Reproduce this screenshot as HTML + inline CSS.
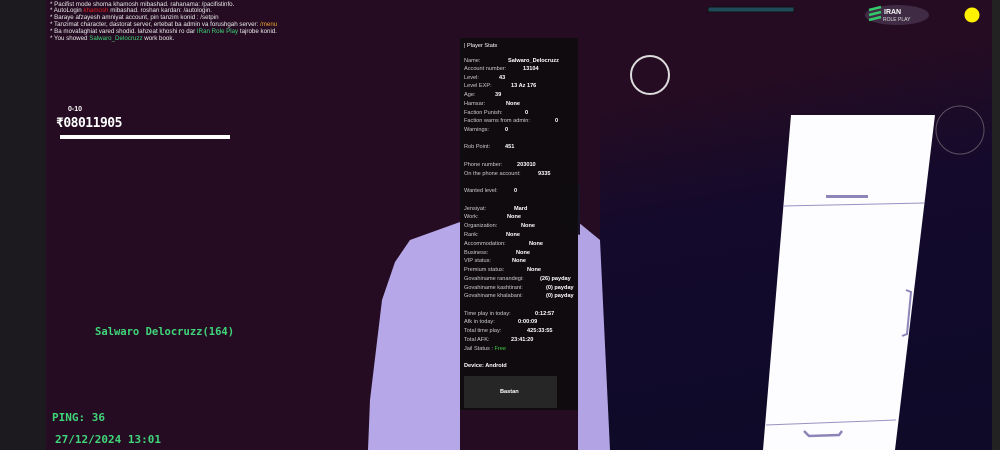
<!DOCTYPE html>
<html><head><meta charset="utf-8"><style>
*{margin:0;padding:0;box-sizing:border-box}
body{width:1000px;height:450px;overflow:hidden;background:#250c22;position:relative;font-family:"Liberation Sans",sans-serif}
.a{position:absolute}
.chat{left:50px;top:1px;color:#e8e8e8;font-size:6.2px;line-height:7px;white-space:nowrap}
.p{left:460px;top:38px;width:118px;height:372px;background:rgba(14,12,14,0.94)}
.l{position:absolute;left:4px;font-size:5.6px;color:#ccc;white-space:nowrap}
.v{position:absolute;font-size:5.6px;color:#fff;font-weight:bold;white-space:nowrap}
.hud{font-family:"DejaVu Sans Mono","Liberation Mono",monospace;font-weight:bold;color:#3fd67a}
</style></head><body>
<div class="a" style="left:0;top:0;width:46px;height:450px;background:#1c1a1e"></div>
<div class="a" style="left:600px;top:0;width:392px;height:450px;background:linear-gradient(170deg,rgba(37,12,34,1) 20%,rgba(20,10,44,1) 45%,rgba(14,10,40,1) 100%)"></div>
<div class="a" style="left:992px;top:0;width:8px;height:450px;background:#222"></div>
<svg class="a" style="left:0;top:0" width="1000" height="450">
<polygon points="410,240 460,222 460,450 368,450 370,400 382,300 395,262" fill="#b6a8e8"/>
<polygon points="578,222 600,240 610,450 578,450" fill="#b2a4e4"/>
<polygon points="560,180 580,185 580,235 560,228" fill="#1a1428"/>
<polygon points="791,115 935,115 895,450 763,450" fill="#fdfcff"/>
<line x1="783" y1="206" x2="924" y2="203" stroke="#9a92c0" stroke-width="1"/>
<line x1="766" y1="425" x2="896" y2="420" stroke="#9a92c0" stroke-width="1"/>
<rect x="826" y="195" width="42" height="3" fill="#8c86b8"/>
<path d="M804 431 l5 5 l30 -1 l3 -4" stroke="#8c86b8" stroke-width="2.5" fill="none"/>
<path d="M906 290 l5 2 l-4 42 l-5 2" stroke="#8c86b8" stroke-width="2" fill="none"/>
<circle cx="650" cy="75" r="19" fill="none" stroke="#ddd" stroke-width="2"/>
<circle cx="960" cy="130" r="24" fill="none" stroke="#5c5060" stroke-width="1"/>
<rect x="708" y="7" width="86" height="5" fill="#1e4a5a" stroke="#111" stroke-width="1"/>
<ellipse cx="897" cy="15" rx="32" ry="10" fill="#4a3a52" opacity=".7"/>
<path d="M869 10 l12 -3 M869 15 l12 -3 M869 20 l12 -3" stroke="#33c96a" stroke-width="2.5"/>
<circle cx="972" cy="15" r="7.5" fill="#fff200"/>
<rect x="60" y="135" width="170" height="4" fill="#fff"/>
</svg>
<div class="a" style="left:884px;top:9px;color:#fff;font-size:7px;font-weight:bold">IRAN</div>
<div class="a" style="left:883px;top:17px;color:#ddd;font-size:5px">ROLE PLAY</div>
<div class="a chat">
<div>* Pacifist mode shoma khamosh mibashad. rahanama: /pacifistinfo.</div>
<div style="margin-top:-1px">* AutoLogin <span style="color:#e02020">khamosh</span> mibashad. roshan kardan: /autologin.</div>
<div>* Baraye afzayesh amniyat account, pin tanzim konid : /setpin</div>
<div>* Tanzimat character, dastorat server, ertebat ba admin va forushgah server: <span style="color:#f0a030">/menu</span></div>
<div>* Ba movafaghiat vared shodid. lahzeat khoshi ro dar <span style="color:#3fd67a">IRan Role Play</span> tajrobe konid.</div>
<div>* You showed <span style="color:#3fd67a">Salwaro_Delocruzz</span> work book.</div>
</div>
<div class="a" style="left:68px;top:106px;color:#fff;font-size:7px;font-weight:bold">0-10</div>
<div class="a" style="left:56px;top:116px;color:#fff;font-size:13px;font-weight:bold;font-family:'DejaVu Sans Mono',monospace;letter-spacing:-0.5px">₹08011905</div>
<div class="a hud" style="left:95px;top:326px;font-size:10.5px">Salwaro Delocruzz(164)</div>
<div class="a hud" style="left:52px;top:411px;font-size:11px">PING: 36</div>
<div class="a hud" style="left:55px;top:433px;font-size:11px">27/12/2024 13:01</div>
<div class="a p">
<div class="v" style="left:4px;top:5px;font-weight:normal">| Player Stats</div>
<div class="l" style="top:20px">Name:</div><div class="v" style="left:48px;top:20px">Salwaro_Delocruzz</div>
<div class="l" style="top:28px">Account number:</div><div class="v" style="left:63px;top:28px">13104</div>
<div class="l" style="top:37px">Level:</div><div class="v" style="left:39px;top:37px">43</div>
<div class="l" style="top:45px">Level EXP:</div><div class="v" style="left:51px;top:45px">13 Az 176</div>
<div class="l" style="top:54px">Age:</div><div class="v" style="left:35px;top:54px">39</div>
<div class="l" style="top:63px">Hamsar:</div><div class="v" style="left:46px;top:63px">None</div>
<div class="l" style="top:72px">Faction Punish:</div><div class="v" style="left:65px;top:72px">0</div>
<div class="l" style="top:80px">Faction warns from admin:</div><div class="v" style="left:95px;top:80px">0</div>
<div class="l" style="top:89px">Warnings:</div><div class="v" style="left:45px;top:89px">0</div>
<div class="l" style="top:106px">Rob Point:</div><div class="v" style="left:45px;top:106px">451</div>
<div class="l" style="top:124px">Phone number:</div><div class="v" style="left:57px;top:124px">203010</div>
<div class="l" style="top:133px">On the phone account:</div><div class="v" style="left:78px;top:133px">9335</div>
<div class="l" style="top:150px">Wanted level:</div><div class="v" style="left:54px;top:150px">0</div>
<div class="l" style="top:168px">Jensiyat:</div><div class="v" style="left:54px;top:168px">Mard</div>
<div class="l" style="top:176px">Work:</div><div class="v" style="left:47px;top:176px">None</div>
<div class="l" style="top:185px">Organization:</div><div class="v" style="left:61px;top:185px">None</div>
<div class="l" style="top:194px">Rank:</div><div class="v" style="left:46px;top:194px">None</div>
<div class="l" style="top:203px">Accommodation:</div><div class="v" style="left:69px;top:203px">None</div>
<div class="l" style="top:212px">Business:</div><div class="v" style="left:56px;top:212px">None</div>
<div class="l" style="top:220px">VIP status:</div><div class="v" style="left:52px;top:220px">None</div>
<div class="l" style="top:229px">Premium status:</div><div class="v" style="left:67px;top:229px">None</div>
<div class="l" style="top:238px">Govahiname ranandegi:</div><div class="v" style="left:80px;top:238px">(26) payday</div>
<div class="l" style="top:247px">Govahiname kashtirani:</div><div class="v" style="left:86px;top:247px">(0) payday</div>
<div class="l" style="top:255px">Govahiname khalabani:</div><div class="v" style="left:86px;top:255px">(0) payday</div>
<div class="l" style="top:273px">Time play in today:</div><div class="v" style="left:75px;top:273px">0:12:57</div>
<div class="l" style="top:281px">Afk in today:</div><div class="v" style="left:58px;top:281px">0:00:09</div>
<div class="l" style="top:290px">Total time play:</div><div class="v" style="left:67px;top:290px">425:33:55</div>
<div class="l" style="top:299px">Total AFK:</div><div class="v" style="left:51px;top:299px">23:41:20</div>
<div class="l" style="top:308px">Jail Status : <span style="color:#4c4">Free</span></div>
<div class="v" style="left:4px;top:325px">Device: Android</div>
<div class="a" style="left:4px;top:338px;width:93px;height:32px;background:#262626"></div>
<div class="v" style="left:40px;top:351px">Bastan</div>
</div>
</body></html>
